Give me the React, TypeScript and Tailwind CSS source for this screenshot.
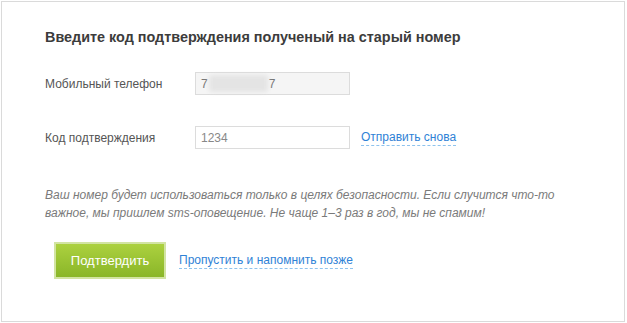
import React from "react";

const font = "font-['Liberation_Sans',Arial,sans-serif]";

export default function App() {
  return (
    <div className={`${font} bg-white w-[627px] h-[323px] pt-[1px] pl-[1px]`}>
      <div className="w-[624px] h-[321px] border border-[#dadada] pl-[43px] pt-[25px]">
        {/* Title */}
        <h2 className="text-[14.4px] leading-[20px] font-bold text-[#3c3c3c]">
          Введите код подтверждения полученый на старый номер
        </h2>

        {/* Phone row */}
        <div className="flex items-center mt-[25px] h-[23px]">
          <div className="w-[150px] text-[12px] text-[#555]">Мобильный телефон</div>
          <div className="w-[155px] h-[23px] border border-[#dcdcdc] bg-[#f5f5f5] flex items-center pl-[5px] text-[12px] text-[#777]">
            <span>7</span>
            <span className="inline-block w-[59px] h-[17px] mx-[1px] bg-[#e4e4e4] blur-[2px] rounded-sm" />
            <span>7</span>
          </div>
        </div>

        {/* Code row */}
        <div className="flex items-center mt-[31px] h-[23px]">
          <div className="w-[150px] text-[12px] text-[#555]">Код подтверждения</div>
          <div className="w-[155px] h-[23px] border border-[#dcdcdc] bg-white flex items-center pl-[5px] text-[12px] text-[#888]">
            1234
          </div>
          <a className="ml-[11px] text-[12px] leading-[16px] text-[#2f82d6] border-b border-dashed border-[#8ec3ee] cursor-pointer">
            Отправить снова
          </a>
        </div>

        {/* Note */}
        <p className="mt-[37px] text-[12px] leading-[18px] italic text-[#7a7a7a] w-[540px]">
          Ваш номер будет использоваться только в целях безопасности. Если случится что-то важное, мы пришлем sms-оповещение. Не чаще 1–3 раз в год, мы не спамим!
        </p>

        {/* Actions */}
        <div className="flex items-center mt-[20px] ml-[9px]">
          <button className="w-[112px] h-[37px] border-2 border-[#d2e4a2] bg-gradient-to-b from-[#acd13f] to-[#8ab628] text-white text-[13px] leading-none">
            Подтвердить
          </button>
          <a className="ml-[13px] text-[12px] leading-[16px] text-[#2f82d6] border-b border-dashed border-[#8ec3ee] cursor-pointer">
            Пропустить и напомнить позже
          </a>
        </div>
      </div>
    </div>
  );
}
